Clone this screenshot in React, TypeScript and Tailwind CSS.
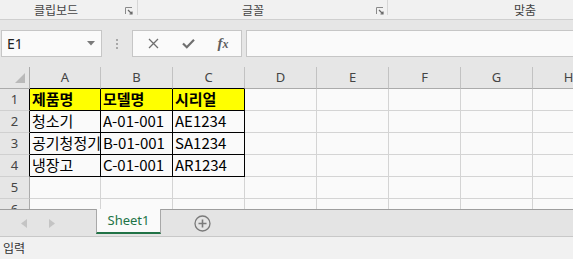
import React from "react";

const font = { fontFamily: '"Noto Sans", "Noto Sans CJK KR", sans-serif' };

const cols = ["A", "B", "C", "D", "E", "F", "G", "H"];
const widths = ["w-[71px]", "w-[72px]", "w-[72px]", "w-[72px]", "w-[72px]", "w-[72px]", "w-[72px]", "w-[72px]"];

const data: string[][] = [
  ["제품명", "모델명", "시리얼"],
  ["청소기", "A-01-001", "AE1234"],
  ["공기청정기", "B-01-001", "SA1234"],
  ["냉장고", "C-01-001", "AR1234"],
];

function Launcher() {
  return (
    <svg width="8" height="8" viewBox="0 0 8 8" className="shrink-0">
      <path d="M0.5 7V0.5H7" fill="none" stroke="#8a8a8a" strokeWidth="1" />
      <path d="M3 3L7 7M7 4.5V7H4.5" fill="none" stroke="#6a6a6a" strokeWidth="1.2" />
    </svg>
  );
}

function Row({ n, h }: { n: number; h: string }) {
  const inTable = n >= 1 && n <= 4;
  return (
    <div className={`flex ${h} shrink-0`}>
      <div
        className={`w-[30px] shrink-0 bg-[#e6e6e6] border-b border-r border-b-[#d0d0d0] flex items-center justify-center text-[13px] text-[#444] ${
          inTable ? "border-r-black" : "border-r-[#ababab]"
        }`}
      >
        {n}
      </div>
      {cols.map((c, i) => {
        const boxed = inTable && i < 3;
        const text = inTable && i < 3 ? data[n - 1][i] : "";
        const head = n === 1 && i < 3;
        return (
          <div
            key={c}
            className={`${widths[i]} shrink-0 border-r border-b overflow-hidden whitespace-nowrap flex items-center pl-[2px] text-[15px] text-black ${
              boxed ? "border-black" : "border-[#d4d4d4]"
            } ${head ? "bg-[#ffff00] font-bold" : "bg-[#fafafa]"}`}
            style={{ fontFamily: '"Noto Sans CJK KR", "Noto Sans", sans-serif' }}
          >
            {text}
          </div>
        );
      })}
    </div>
  );
}

export default function App() {
  return (
    <div className="w-[573px] h-[259px] overflow-hidden bg-[#e6e6e6] flex flex-col" style={font}>
      {/* Ribbon group labels */}
      <div className="h-[20px] shrink-0 flex bg-[#f1f1f1] border-b border-[#cfcfcf] text-[12px] text-[#444]">
        <div className="w-[138px] shrink-0 flex items-center pl-[34px] pr-[4px] border-r border-[#d6d6d6] mb-[4px]">
          <span className="leading-none mt-[6px]">클립보드</span>
          <span className="ml-auto mt-[6px]"><Launcher /></span>
        </div>
        <div className="w-[250px] shrink-0 flex items-center pl-[104px] pr-[3px] border-r border-[#d6d6d6] mb-[4px]">
          <span className="leading-none mt-[6px]">글꼴</span>
          <span className="ml-auto mt-[6px]"><Launcher /></span>
        </div>
        <div className="flex-1 flex items-center pl-[126px]">
          <span className="leading-none mt-[2px]">맞춤</span>
        </div>
      </div>

      {/* Formula bar */}
      <div className="h-[47px] shrink-0 flex pt-[10px]">
        <div className="ml-[1px] w-[101px] h-[27px] shrink-0 bg-[#fafafa] border border-[#c6c6c6] flex items-center pl-[5px] pr-[6px] text-[14px] text-[#222]">
          <span>E1</span>
          <svg width="8" height="5" viewBox="0 0 8 5" className="ml-auto">
            <path d="M0 0H8L4 4.5Z" fill="#7a7a7a" />
          </svg>
        </div>
        <div className="w-[30px] shrink-0 flex flex-col items-center justify-center gap-[2px] h-[27px]">
          <span className="w-[2px] h-[2px] bg-[#a8a8a8]" />
          <span className="w-[2px] h-[2px] bg-[#a8a8a8]" />
          <span className="w-[2px] h-[2px] bg-[#a8a8a8]" />
        </div>
        <div className="w-[110px] h-[27px] shrink-0 bg-[#fafafa] border border-[#c6c6c6] flex items-center">
          <div className="w-[38px] flex justify-center pl-[2px]">
            <svg width="11" height="11" viewBox="0 0 11 11">
              <path d="M1 1L10 10M10 1L1 10" stroke="#6f6f6f" strokeWidth="1.3" />
            </svg>
          </div>
          <div className="w-[34px] flex justify-center">
            <svg width="13" height="11" viewBox="0 0 13 11">
              <path d="M1 5.5L4.8 9.2L12 1.8" fill="none" stroke="#6f6f6f" strokeWidth="2.2" />
            </svg>
          </div>
          <div className="w-[36px] flex justify-center">
            <span
              className="italic text-[15px] text-[#5f5f5f] leading-none font-bold"
              style={{ fontFamily: '"Liberation Serif", "DejaVu Serif", serif' }}
            >
              f<span className="text-[12px]">x</span>
            </span>
          </div>
        </div>
        <div className="ml-[4px] flex-1 h-[27px] bg-[#fafafa] border border-[#c6c6c6] border-r-0" />
      </div>

      {/* Column headers */}
      <div className="flex h-[22px] shrink-0">
        <div className="w-[30px] shrink-0 bg-[#e6e6e6] border-r border-b border-[#ababab] flex items-end justify-end pr-[4px] pb-[5px]">
          <svg width="10" height="10" viewBox="0 0 10 10">
            <path d="M10 0V10H0Z" fill="#b9b9b9" />
          </svg>
        </div>
        {cols.map((c, i) => (
          <div
            key={c}
            className={`${widths[i]} shrink-0 bg-[#e6e6e6] border-r border-b flex items-center justify-center text-[13px] text-[#444] border-r-[#c2c2c2] ${
              i < 3 ? "border-b-black" : "border-b-[#ababab]"
            }`}
          >
            {c}
          </div>
        ))}
      </div>

      {/* Rows */}
      {[1, 2, 3, 4, 5].map((n) => (
        <Row key={n} n={n} h="h-[22px]" />
      ))}
      <div className="h-[10px] shrink-0 overflow-hidden">
        <Row n={6} h="h-[22px]" />
      </div>

      {/* Sheet tabs */}
      <div className="h-[28px] shrink-0 flex bg-[#e4e4e4] border-t border-[#9e9e9e] border-b border-b-[#c8c8c8]">
        <div className="w-[96px] shrink-0 flex items-center pl-[21px] gap-[22px]">
          <svg width="6" height="9" viewBox="0 0 6 9">
            <path d="M6 0V9L0 4.5Z" fill="#c4c4c4" />
          </svg>
          <svg width="6" height="9" viewBox="0 0 6 9">
            <path d="M0 0V9L6 4.5Z" fill="#c4c4c4" />
          </svg>
        </div>
        <div className="-mt-[1px] w-[65px] h-[25px] shrink-0 bg-[#fafafa] border-x border-[#a8a8a8] border-b-2 border-b-[#217346] flex items-center justify-center text-[13px] text-[#217346]">
          Sheet1
        </div>
        <div className="ml-[33px] flex items-center">
          <svg width="17" height="17" viewBox="0 0 17 17">
            <circle cx="8.5" cy="8.5" r="7.5" fill="none" stroke="#7a7a7a" strokeWidth="1.3" />
            <path d="M8.5 4.5V12.5M4.5 8.5H12.5" stroke="#7a7a7a" strokeWidth="1.6" />
          </svg>
        </div>
      </div>

      {/* Status bar */}
      <div className="flex-1 bg-[#f1f1f1] flex items-center pl-[3px] pt-[2px] text-[12px] text-[#333]">
        입력
      </div>
    </div>
  );
}
